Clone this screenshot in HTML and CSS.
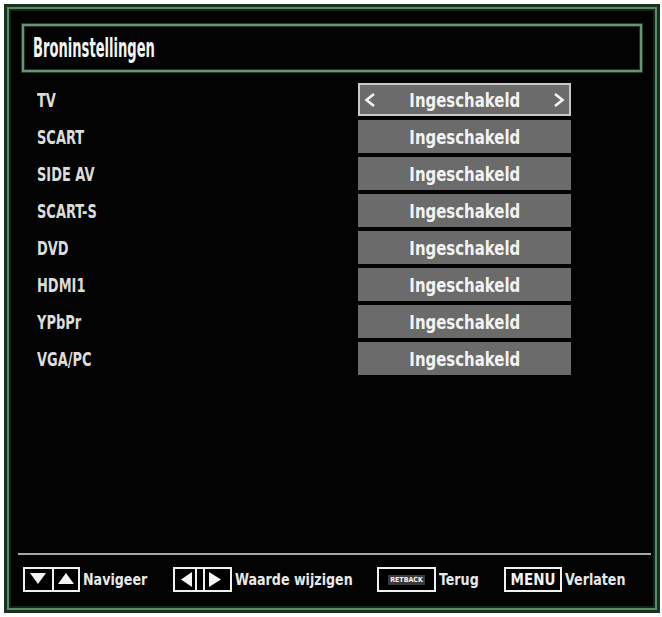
FILE: index.html
```html
<!DOCTYPE html>
<html lang="nl">
<head>
<meta charset="utf-8">
<title>Broninstellingen</title>
<link rel="stylesheet" href="styles.css">
</head>
<body>
<div class="frame">
  <div class="frame-inner">
    <div class="screen">
      <header class="title-box">
        <h1 class="title"><span class="cx cx-title">Broninstellingen</span></h1>
      </header>

      <ul class="sources">
        <li class="row selected">
          <span class="label"><span class="cx cx-label">TV</span></span>
          <span class="value">
            <svg class="chev" width="12" height="16" viewBox="0 0 12 16"><polyline points="10,2 2.5,8 10,14" fill="none" stroke="#f2f2f2" stroke-width="2.6"/></svg>
            <span class="cx cx-value">Ingeschakeld</span>
            <svg class="chev" width="12" height="16" viewBox="0 0 12 16"><polyline points="2,2 9.5,8 2,14" fill="none" stroke="#f2f2f2" stroke-width="2.6"/></svg>
          </span>
        </li>
        <li class="row"><span class="label"><span class="cx cx-label">SCART</span></span><span class="value"><span class="cx cx-value">Ingeschakeld</span></span></li>
        <li class="row"><span class="label"><span class="cx cx-label">SIDE AV</span></span><span class="value"><span class="cx cx-value">Ingeschakeld</span></span></li>
        <li class="row"><span class="label"><span class="cx cx-label">SCART-S</span></span><span class="value"><span class="cx cx-value">Ingeschakeld</span></span></li>
        <li class="row"><span class="label"><span class="cx cx-label">DVD</span></span><span class="value"><span class="cx cx-value">Ingeschakeld</span></span></li>
        <li class="row"><span class="label"><span class="cx cx-label">HDMI1</span></span><span class="value"><span class="cx cx-value">Ingeschakeld</span></span></li>
        <li class="row"><span class="label"><span class="cx cx-label">YPbPr</span></span><span class="value"><span class="cx cx-value">Ingeschakeld</span></span></li>
        <li class="row"><span class="label"><span class="cx cx-label">VGA/PC</span></span><span class="value"><span class="cx cx-value">Ingeschakeld</span></span></li>
      </ul>

      <footer class="footer">
        <div class="hint hint-nav">
          <svg class="keysvg" width="57" height="25" viewBox="0 0 57 25">
            <rect x="1" y="1" width="55" height="23" fill="#000" stroke="#f0f0f0" stroke-width="2"/>
            <line x1="30" y1="1" x2="30" y2="24" stroke="#f0f0f0" stroke-width="2"/>
            <polygon points="7,6 23,6 15,17" fill="#f4f4f4"/>
            <polygon points="35,17 51,17 43,6" fill="#f4f4f4"/>
          </svg>
          <span class="hint-text"><span class="cx cx-hint">Navigeer</span></span>
        </div>
        <div class="hint hint-lr">
          <svg class="keysvg" width="59" height="25" viewBox="0 0 59 25">
            <rect x="1" y="1" width="57" height="23" fill="#000" stroke="#f0f0f0" stroke-width="2"/>
            <line x1="23" y1="1" x2="23" y2="24" stroke="#f0f0f0" stroke-width="2"/>
            <line x1="31" y1="1" x2="31" y2="24" stroke="#f0f0f0" stroke-width="2"/>
            <polygon points="19,5 19,20 8,12.5" fill="#f4f4f4"/>
            <polygon points="36,5 36,20 48,12.5" fill="#f4f4f4"/>
          </svg>
          <span class="hint-text"><span class="cx cx-hint">Waarde wijzigen</span></span>
        </div>
        <div class="hint hint-ret">
          <span class="key key-ret"><span class="key-ret-label">RETBACK</span></span>
          <span class="hint-text"><span class="cx cx-hint">Terug</span></span>
        </div>
        <div class="hint hint-menu">
          <span class="key key-menu">MENU</span>
          <span class="hint-text"><span class="cx cx-hint">Verlaten</span></span>
        </div>
      </footer>
    </div>
  </div>
</div>
</body>
</html>
```

FILE: styles.css
```css
* {
  box-sizing: border-box;
  margin: 0;
  padding: 0;
}

html,
body {
  background: #ffffff;
}

body {
  width: 662px;
  height: 617px;
  overflow: hidden;
  font-family: "DejaVu Sans Condensed", "DejaVu Sans", sans-serif;
  font-stretch: condensed;
  font-weight: 700;
  color: #e6e6e6;
}

.frame {
  margin: 4px 0 0 4px;
  width: 656px;
  height: 609px;
  padding: 3px;
  background: #1a3020;
}

.frame-inner {
  height: 100%;
  border: 2px solid #5a8a66;
}

.screen {
  height: 100%;
  border: 2px solid #132618;
  background: #020302;
  display: flex;
  flex-direction: column;
}

.title-box {
  margin: 13px 11px 0;
  height: 48px;
  border: 2px solid #6b9474;
  box-shadow: 0 0 0 1px #223d29, inset 0 0 0 1px #1d3323;
  display: flex;
  align-items: center;
  padding-left: 9px;
}

.title {
  font-size: 26px;
  font-weight: 700;
  line-height: 1;
  color: #f4f4f4;
}

.cx {
  display: inline-block;
  white-space: nowrap;
}

.cx-title {
  transform: scaleX(0.56);
  transform-origin: left center;
}

.sources {
  list-style: none;
  margin-top: 11px;
  padding-left: 26px;
  display: flex;
  flex-direction: column;
  gap: 4px;
}

.row {
  display: flex;
  align-items: center;
  height: 33px;
}

.label {
  width: 321px;
  font-size: 19px;
  color: #dcdcdc;
}

.cx-label {
  transform: scaleX(0.76);
  transform-origin: left center;
}

.value {
  width: 213px;
  height: 33px;
  background: #6b6b6b;
  display: grid;
  grid-template-columns: 20px 1fr 20px;
  align-items: center;
  justify-items: center;
  font-size: 20px;
  color: #f3f3f3;
}

.value .cx-value {
  grid-column: 2;
  transform: scaleX(0.83);
}

.row.selected .value {
  border: 2px solid #c9c9c9;
}

.chev {
  display: block;
}

.footer {
  margin: auto 2px 0 7px;
  height: 53px;
  border-top: 2px solid #a8a8a8;
  padding: 12px 0 0 5px;
  display: flex;
  align-items: flex-start;
}

.hint {
  flex: none;
  display: flex;
  align-items: center;
  gap: 3px;
  height: 25px;
}

.hint-nav {
  width: 150px;
}

.hint-lr {
  width: 204px;
}

.hint-ret {
  width: 127px;
}

.keysvg {
  display: block;
  flex: none;
}

.hint-text {
  font-size: 16px;
  color: #e8e8e8;
}

.cx-hint {
  transform: scaleX(0.88);
  transform-origin: left center;
}

.key {
  flex: none;
  width: 59px;
  height: 25px;
  border: 2px solid #f0f0f0;
  background: #000;
  display: flex;
  align-items: center;
  justify-content: center;
  color: #f2f2f2;
}

.key-ret-label {
  font-size: 7px;
  letter-spacing: 0;
  padding: 1px 2px;
  background: #3a3a3a;
}

.key-menu {
  width: 58px;
  font-size: 15px;
}
```
